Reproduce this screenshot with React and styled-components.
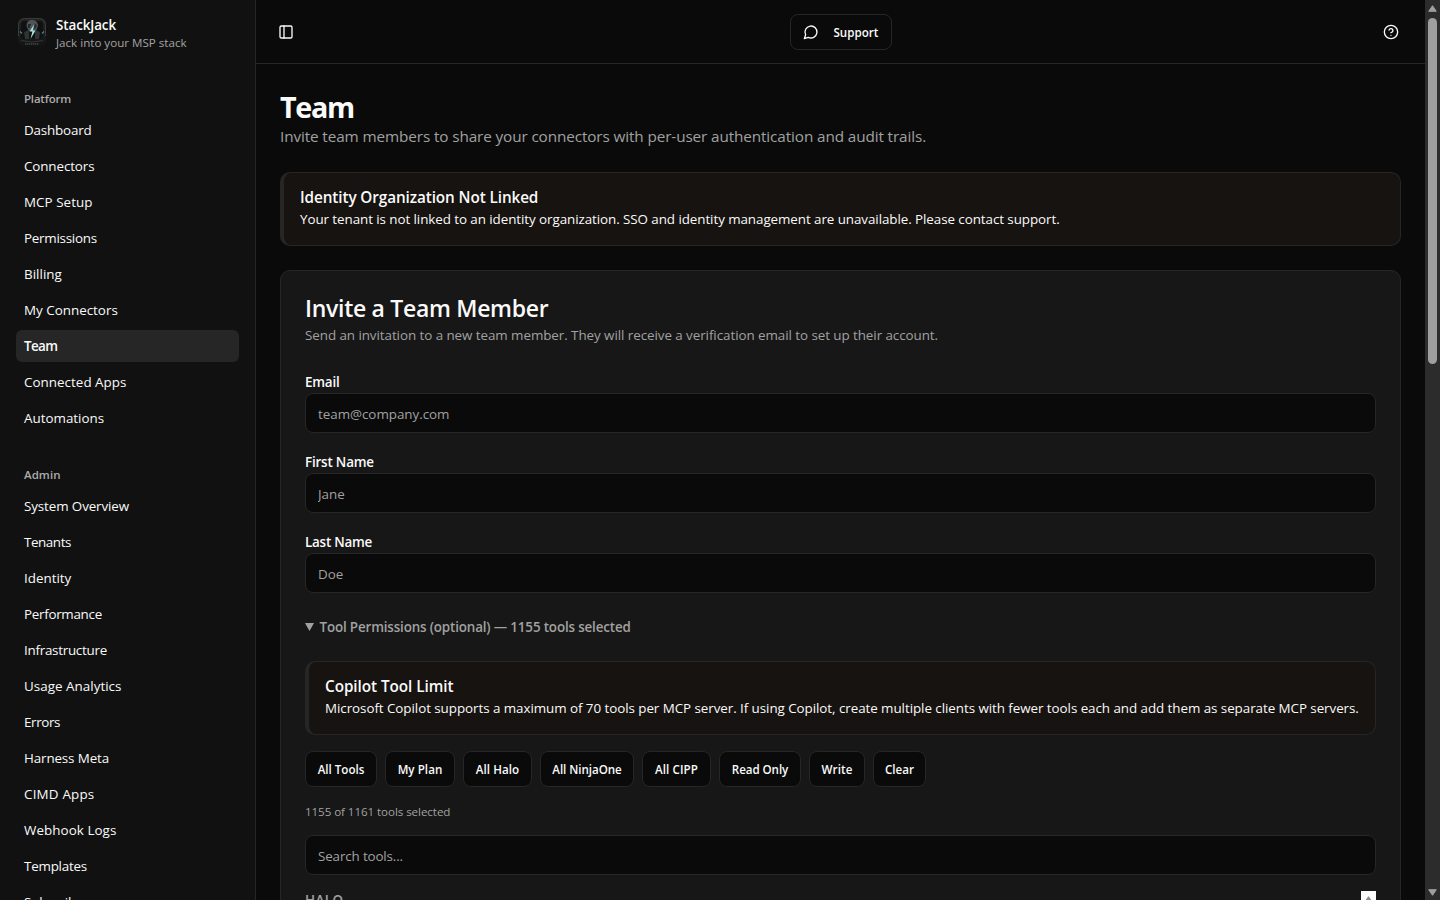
import React from "react";
import styled, { createGlobalStyle } from "styled-components";
import { CircleHelp, PanelLeft } from "lucide-react";

const platformLinks = [
  { label: "Dashboard", spacing: -0.18 },
  { label: "Connectors", spacing: -0.11 },
  { label: "MCP Setup", spacing: 0.05 },
  { label: "Permissions", spacing: -0.25 },
  { label: "Billing", spacing: 0.04 },
  { label: "My Connectors", spacing: 0 },
  { label: "Team", spacing: -0.6, active: true },
  { label: "Connected Apps", spacing: 0.03 },
  { label: "Automations", spacing: 0 },
];

const adminLinks = [
  { label: "System Overview", spacing: -0.11 },
  { label: "Tenants", spacing: -0.42 },
  { label: "Identity", spacing: 0 },
  { label: "Performance", spacing: -0.29 },
  { label: "Infrastructure", spacing: -0.26 },
  { label: "Usage Analytics", spacing: 0.03 },
  { label: "Errors", spacing: -0.38 },
  { label: "Harness Meta", spacing: -0.13 },
  { label: "CIMD Apps", spacing: 0.2 },
  { label: "Webhook Logs", spacing: 0.06 },
  { label: "Templates", spacing: -0.22 },
  { label: "Subscribers", spacing: -0.2 },
];

const fields = [
  { label: "Email", placeholder: "team@company.com", spacing: -0.2 },
  { label: "First Name", placeholder: "Jane", spacing: -0.18 },
  { label: "Last Name", placeholder: "Doe", spacing: -0.22 },
];

const presets = [
  { label: "All Tools", width: 72, spacing: 0 },
  { label: "My Plan", width: 70, spacing: 0.05 },
  { label: "All Halo", width: 69, spacing: 0.08 },
  { label: "All NinjaOne", width: 94, spacing: -0.05 },
  { label: "All CIPP", width: 69, spacing: 0.12 },
  { label: "Read Only", width: 82, spacing: -0.06 },
  { label: "Write", width: 56, spacing: 0.1 },
  { label: "Clear", width: 53, spacing: 0 },
];

const NavGroup = ({ title, spacing, links }) => (
  <Group>
    <GroupLabel $spacing={spacing}>{title}</GroupLabel>
    <NavList>
      {links.map((link) => (
        <NavItem key={link.label} $active={link.active} $spacing={link.spacing}>
          {link.label}
        </NavItem>
      ))}
    </NavList>
  </Group>
);

const Logo = () => (
  <LogoSvg viewBox="0 0 32 32">
    <defs>
      <linearGradient id="logoBg" x1="0" y1="0" x2="0" y2="1">
        <stop offset="0" stopColor="#242626" />
        <stop offset="0.6" stopColor="#1a1c1c" />
        <stop offset="1" stopColor="#121212" />
      </linearGradient>
    </defs>
    <rect x="2" y="2" width="28" height="29" rx="6" fill="url(#logoBg)" />
    <path
      d="M2.500 20V8.500a6 6 0 0 1 6-6h15a6 6 0 0 1 6 6V20"
      fill="none"
      stroke="#3a3c3c"
      strokeWidth="1"
    />
    <rect x="5" y="5" width="22" height="18" rx="4" fill="#101111" />
    <path d="M10.500 10c0-4 2.200-6 5.500-6s6 2 6 6l-2 5h-7.500z" fill="#505454" />
    <path d="M12 8h3l-1.500 4H12zM19 7l2 3-2 3h-1z" fill="#252828" />
    <path d="M8 16l5-2v9H9zM24 16l-5-2v9h4z" fill="#2f3333" />
    <path d="M4 15.500l2 2M28 15.500l-2 2" stroke="#4d8587" strokeWidth="1.200" />
    <path d="M18 8.500l-4.500 7h2.900L14.500 23l5-8.500h-2.700z" fill="#a5e3e2" />
    <path d="M5 24.500q11 3 22 0" fill="none" stroke="#343737" strokeWidth="1" />
    <path d="M9 28h14" stroke="#414343" strokeWidth="1.300" strokeDasharray="1.500 .5" />
  </LogoSvg>
);

const ChatIcon = () => (
  <ChatSvg viewBox="0 0 24 24">
    <path d="M7.900 20A9 9 0 1 0 4 16.100L2 22Z" />
  </ChatSvg>
);

const App = () => {
  return (
    <>
      <GlobalStyle />
      <Page>
        <Sidebar>
          <Brand>
            <Logo />
            <BrandText>
              <BrandName>StackJack</BrandName>
              <Tagline>Jack into your MSP stack</Tagline>
            </BrandText>
          </Brand>
          <NavGroup title="Platform" spacing={-0.2} links={platformLinks} />
          <NavGroup title="Admin" spacing={0.05} links={adminLinks} />
        </Sidebar>

        <Main>
          <Header>
            <IconButton aria-label="Toggle sidebar">
              <PanelLeft size={16} />
            </IconButton>
            <SupportButton>
              <ChatIcon />
              Support
            </SupportButton>
            <IconButton aria-label="Help">
              <CircleHelp size={16} />
            </IconButton>
          </Header>

          <Content>
            <Title>Team</Title>
            <Subtitle>
              Invite team members to share your connectors with per-user
              authentication and audit trails.
            </Subtitle>

            <Alert>
              <AlertTitle $spacing={-0.1}>Identity Organization Not Linked</AlertTitle>
              <AlertText $spacing={-0.07}>
                Your tenant is not linked to an identity organization. SSO and
                identity management are unavailable. Please contact support.
              </AlertText>
            </Alert>

            <Card>
              <CardTitle>Invite a Team Member</CardTitle>
              <CardText>
                Send an invitation to a new team member. They will receive a
                verification email to set up their account.
              </CardText>

              {fields.map((field) => (
                <Field key={field.label}>
                  <Label $spacing={field.spacing}>{field.label}</Label>
                  <Input placeholder={field.placeholder} />
                </Field>
              ))}

              <Summary>
                <Triangle viewBox="0 0 9 8">
                  <path d="M0 0h9L4.500 8z" fill="currentColor" />
                </Triangle>
                Tool Permissions (optional) — 1155 tools selected
              </Summary>

              <Alert>
                <AlertTitle $spacing={-0.06}>Copilot Tool Limit</AlertTitle>
                <AlertText $spacing={-0.057}>
                  Microsoft Copilot supports a maximum of 70 tools per MCP
                  server. If using Copilot, create multiple clients with fewer
                  tools each and add them as separate MCP servers.
                </AlertText>
              </Alert>

              <Presets>
                {presets.map((preset) => (
                  <PresetButton
                    key={preset.label}
                    $width={preset.width}
                    $spacing={preset.spacing}
                  >
                    {preset.label}
                  </PresetButton>
                ))}
              </Presets>

              <Count>1155 of 1161 tools selected</Count>
              <Input placeholder="Search tools..." $spacing={-0.14} />

              <ToolList>
                <ToolGroup>HALO</ToolGroup>
                <ListScrollbar>
                  <ListArrow viewBox="0 0 9 7">
                    <path
                      d="M4.500 .7L8.300 6.300H.7z"
                      fill="#8b8b8b"
                      stroke="#8b8b8b"
                      strokeLinejoin="round"
                    />
                  </ListArrow>
                </ListScrollbar>
              </ToolList>
            </Card>
          </Content>
        </Main>

        <Scrollbar>
          <Arrow viewBox="0 0 9 7">
            <path d="M4.500 .7L8.300 6.300H.7z" fill="#9f9f9f" stroke="#9f9f9f" strokeLinejoin="round" />
          </Arrow>
          <Thumb />
          <Arrow viewBox="0 0 9 7">
            <path d="M4.500 6.300L.7 .7h7.600z" fill="#9f9f9f" stroke="#9f9f9f" strokeLinejoin="round" />
          </Arrow>
        </Scrollbar>
      </Page>
    </>
  );
};

export default App;

// ------------------ Styled Components ------------------

const GlobalStyle = createGlobalStyle`
  * {
    box-sizing: border-box;
  }

  body {
    margin: 0;
    overflow: hidden;
    background: #0a0a0a;
    color: #fafafa;
    font-family: "Open Sans", "Noto Sans", sans-serif;
  }

  h1, h2, h3, p {
    margin: 0;
  }

  button, input {
    font-family: inherit;
    color: inherit;
  }
`;

const Page = styled.div`
  display: flex;
  height: 100vh;
  overflow: hidden;
`;

const Sidebar = styled.aside`
  flex: 0 0 256px;
  padding: 16px 16px 0;
  background: #111111;
  border-right: 1px solid #262626;
  overflow: hidden;
`;

const Brand = styled.div`
  display: flex;
  gap: 8px;
  height: 66px;
`;

const LogoSvg = styled.svg`
  width: 32px;
  height: 32px;
`;

const BrandText = styled.div`
  display: flex;
  flex-direction: column;
  white-space: nowrap;
`;

const BrandName = styled.span`
  font-size: 13.4px;
  font-weight: 650;
  line-height: 18px;
  letter-spacing: -0.1px;
`;

const Tagline = styled.span`
  font-size: 11.6px;
  line-height: 17px;
  color: #a3a3a3;
`;

const Group = styled.div`
  margin-bottom: 24px;
`;

const GroupLabel = styled.div`
  height: 32px;
  padding: 1px 0 0 8px;
  font-size: 11.5px;
  font-weight: 600;
  line-height: 32px;
  letter-spacing: ${({ $spacing }) => $spacing}px;
  color: #acacac;
`;

const NavList = styled.nav`
  display: flex;
  flex-direction: column;
  gap: 4px;
`;

const NavItem = styled.a`
  height: 32px;
  padding-left: 8px;
  border-radius: 6px;
  font-size: 13.4px;
  line-height: 32px;
  letter-spacing: ${({ $spacing }) => $spacing}px;
  font-weight: ${({ $active }) => ($active ? 600 : 400)};
  background: ${({ $active }) => ($active ? "#262626" : "transparent")};
`;

const Main = styled.main`
  flex: 1;
  min-width: 0;
`;

const Header = styled.header`
  display: flex;
  align-items: center;
  justify-content: space-between;
  height: 64px;
  padding: 0 18px 0 14px;
  border-bottom: 1px solid #262626;
`;

const IconButton = styled.button`
  display: flex;
  align-items: center;
  justify-content: center;
  width: 32px;
  height: 32px;
  padding: 0;
  border: none;
  background: none;
`;

const SupportButton = styled.button`
  display: flex;
  align-items: center;
  gap: 15px;
  width: 102px;
  height: 36px;
  padding: 1px 0 0 12px;
  margin-left: 4px;
  border: 1px solid #262626;
  border-radius: 8px;
  background: #0a0a0a;
  font-size: 11.6px;
  font-weight: 600;
`;

const ChatSvg = styled.svg`
  width: 16px;
  height: 16px;
  fill: none;
  stroke: currentColor;
  stroke-width: 2;
  stroke-linecap: round;
  stroke-linejoin: round;
`;

const Content = styled.div`
  padding: 24px;
`;

const Title = styled.h1`
  padding-top: 1px;
  font-size: 28.7px;
  font-weight: 700;
  line-height: 36px;
  letter-spacing: -1.3px;
`;

const Subtitle = styled.p`
  margin-bottom: 24px;
  font-size: 15.3px;
  line-height: 23px;
  letter-spacing: -0.115px;
  color: #a1a1a1;
  white-space: nowrap;
`;

const Alert = styled.div`
  height: 74px;
  padding: 13px 16px;
  border: 1px solid #262626;
  border-left-width: 4px;
  border-radius: 10px;
  background: #171310;
  white-space: nowrap;
`;

const AlertTitle = styled.h3`
  font-size: 15.3px;
  font-weight: 600;
  line-height: 23px;
  letter-spacing: ${({ $spacing }) => $spacing}px;
`;

const AlertText = styled.p`
  font-size: 13.4px;
  line-height: 20px;
  letter-spacing: ${({ $spacing }) => $spacing}px;
`;

const Card = styled.section`
  height: 1400px;
  margin-top: 24px;
  padding: 23px 24px;
  border: 1px solid #262626;
  border-radius: 10px;
  background: #171717;
`;

const CardTitle = styled.h2`
  font-size: 23px;
  font-weight: 600;
  line-height: 28px;
  letter-spacing: -0.3px;
`;

const CardText = styled.p`
  padding-top: 1px;
  margin-bottom: 24px;
  font-size: 13.4px;
  line-height: 24px;
  letter-spacing: -0.06px;
  color: #a1a1a1;
`;

const Field = styled.div`
  margin-bottom: 18px;
`;

const Label = styled.label`
  display: block;
  font-size: 13.4px;
  font-weight: 600;
  line-height: 22px;
  letter-spacing: ${({ $spacing }) => $spacing}px;
`;

const Input = styled.input`
  display: block;
  width: 100%;
  height: 40px;
  padding: 2px 12px 0;
  border: 1px solid #262626;
  border-radius: 8px;
  background: #0a0a0a;
  font-size: 13.4px;
  letter-spacing: ${({ $spacing = -0.03 }) => $spacing}px;

  &::placeholder {
    color: #a1a1a1;
    opacity: 1;
  }
`;

const Summary = styled.div`
  display: flex;
  align-items: center;
  gap: 5.5px;
  height: 32px;
  margin-bottom: 18px;
  font-size: 13.4px;
  font-weight: 600;
  letter-spacing: -0.15px;
  color: #a1a1a1;
`;

const Triangle = styled.svg`
  width: 9px;
  height: 8px;
`;

const Presets = styled.div`
  display: flex;
  gap: 8px;
  margin-top: 16px;
`;

const PresetButton = styled.button`
  width: ${({ $width }) => $width}px;
  height: 36px;
  padding: 1px 0 0;
  border: 1px solid #262626;
  border-radius: 8px;
  background: #0a0a0a;
  font-size: 11.6px;
  font-weight: 600;
  letter-spacing: ${({ $spacing }) => $spacing}px;
  white-space: nowrap;
`;

const Count = styled.p`
  margin: 17px 0 15px;
  font-size: 11.6px;
  line-height: 16px;
  letter-spacing: -0.07px;
  color: #a1a1a1;
`;

const ToolList = styled.div`
  display: flex;
  justify-content: space-between;
  height: 200px;
  margin-top: 16px;
`;

const ToolGroup = styled.div`
  font-size: 13.4px;
  font-weight: 600;
  line-height: 19px;
  letter-spacing: 0.4px;
  color: #a1a1a1;
`;

const ListScrollbar = styled.div`
  width: 15px;
  padding: 5px 3px;
  background: #fcfcfc;
`;

const ListArrow = styled.svg`
  display: block;
  width: 9px;
  height: 7px;
`;

const Scrollbar = styled.div`
  display: flex;
  flex: 0 0 15px;
  flex-direction: column;
  align-items: center;
  padding: 5px 0 4px;
  background: #2c2c2c;
`;

const Arrow = styled.svg`
  flex: none;
  width: 9px;
  height: 7px;
`;

const Thumb = styled.div`
  flex: none;
  width: 9px;
  height: 346px;
  margin: 6px 0 auto;
  border-radius: 5px;
  background: #9f9f9f;
`;
